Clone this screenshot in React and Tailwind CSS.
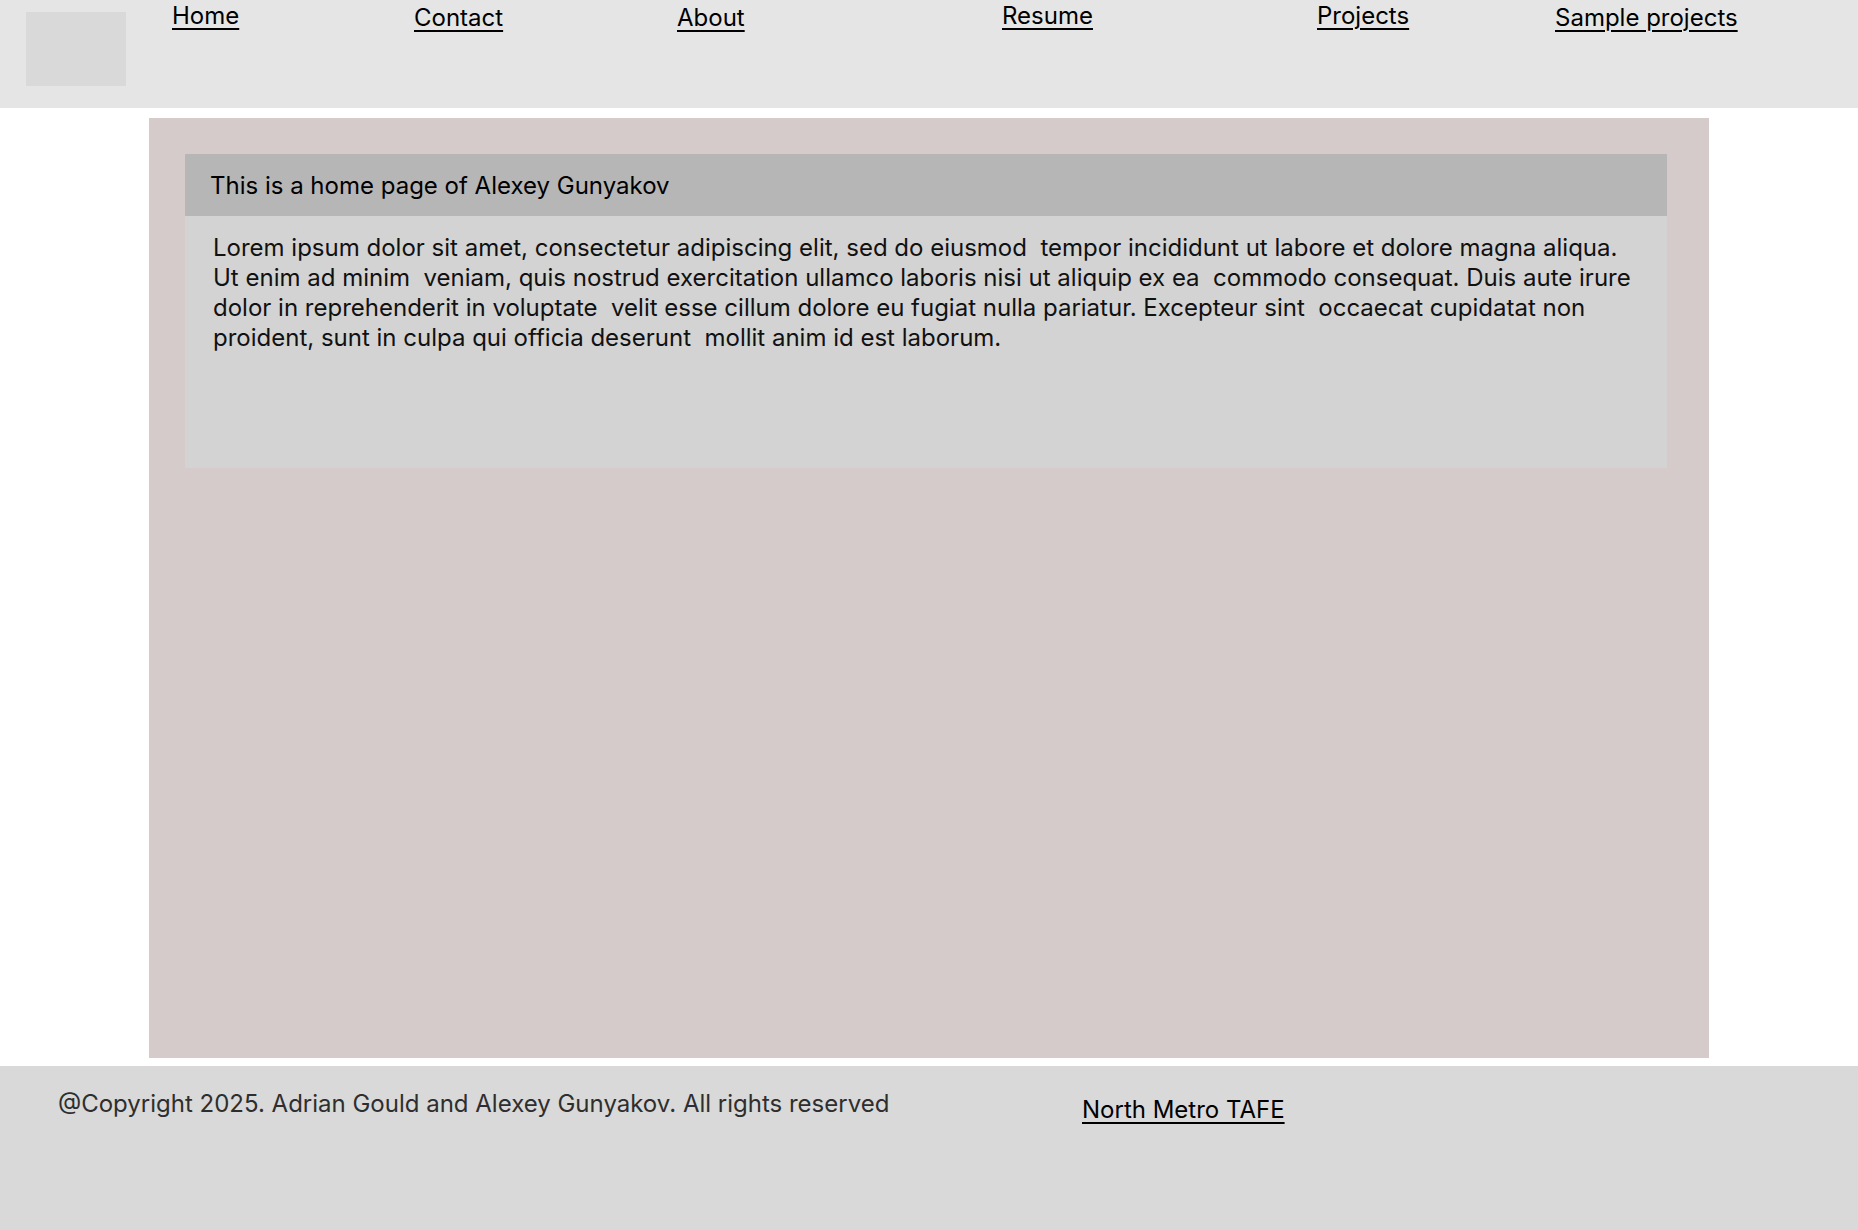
const navLinks = [
  { label: "Home", width: "w-[242px]", shift: "" },
  { label: "Contact", width: "w-[263px]", shift: "mt-[2px]" },
  { label: "About", width: "w-[325px]", shift: "mt-[2px]" },
  { label: "Resume", width: "w-[315px]", shift: "" },
  { label: "Projects", width: "w-[238px]", shift: "" },
  { label: "Sample projects", width: "w-[200px]", shift: "mt-[2px]" },
];

const lorem = [
  "Lorem ipsum dolor sit amet, consectetur adipiscing elit, sed do eiusmod  tempor incididunt ut labore et dolore magna aliqua.",
  "Ut enim ad minim  veniam, quis nostrud exercitation ullamco laboris nisi ut aliquip ex ea  commodo consequat. Duis aute irure",
  "dolor in reprehenderit in voluptate  velit esse cillum dolore eu fugiat nulla pariatur. Excepteur sint  occaecat cupidatat non",
  "proident, sunt in culpa qui officia deserunt  mollit anim id est laborum.",
];

function Header() {
  return (
    <header className="h-[108px] bg-[#e5e5e5] flex items-start">
      <div className="ml-[26px] mt-[12px] w-[100px] h-[74px] bg-[#d9d9d9]" />
      <nav className="ml-[46px] flex items-start pt-[1px]">
        {navLinks.map((l) => (
          <div key={l.label} className={`${l.width} ${l.shift}`}>
            <a
              href="#"
              className="text-[24px] leading-[29px] text-black underline underline-offset-[4px] decoration-[1.5px]"
            >
              {l.label}
            </a>
          </div>
        ))}
      </nav>
    </header>
  );
}

function HomeCard() {
  return (
    <div className="ml-[36px] mr-[42px] mt-[36px]">
      <div className="h-[62px] bg-[#b6b6b6] flex items-center pl-[25px] pt-[2px] text-[24px] text-black">
        This is a home page of Alexey Gunyakov
      </div>
      <div className="h-[252px] bg-[#d3d3d3] pl-[28px] pt-[17px] text-[24px] leading-[30px] text-[#111]">
        {lorem.map((line, i) => (
          <p key={i} className="whitespace-pre">
            {line}
          </p>
        ))}
      </div>
    </div>
  );
}

function Footer() {
  return (
    <footer className="h-[164px] bg-[#d9d9d9] flex items-start pl-[58px]">
      <div className="w-[1024px] pt-[23px] text-[24px] leading-[30px] text-[#2e2e2e]">
        @Copyright 2025. Adrian Gould and Alexey Gunyakov. All rights reserved
      </div>
      <div className="pt-[29px]">
        <a
          href="#"
          className="text-[24px] leading-[29px] text-black underline underline-offset-[4px] decoration-[1.5px]"
        >
          North Metro TAFE
        </a>
      </div>
    </footer>
  );
}

export default function App() {
  return (
    <div className="min-h-[1230px] bg-white font-['Inter',sans-serif]">
      <Header />
      <main className="w-[1560px] h-[940px] mx-auto mt-[10px] bg-[#d5cbca] overflow-hidden">
        <HomeCard />
      </main>
      <div className="h-[8px]" />
      <Footer />
    </div>
  );
}
